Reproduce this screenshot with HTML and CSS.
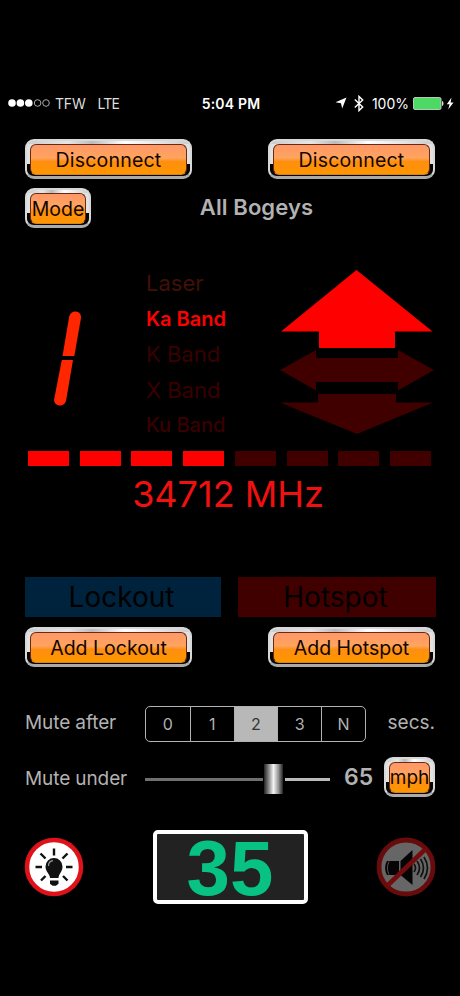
FILE: index.html
```html
<!DOCTYPE html>
<html lang="en">
<head>
  <meta charset="UTF-8" />
  <title>Radar Display</title>
  <link rel="stylesheet" href="styles.css">
</head>
<body>
  <div class="status">
    <div class="carrier">
      <svg width="42" height="10" viewBox="0 0 42 10">
        <g fill="#fff"><circle cx="4" cy="5" r="3.8"/><circle cx="12.4" cy="5" r="3.8"/><circle cx="20.8" cy="5" r="3.8"/></g>
        <g fill="none" stroke="#aaa"><circle cx="29.6" cy="5" r="3.3"/><circle cx="38" cy="5" r="3.3"/></g>
      </svg>
      <span class="tfw">TFW</span>
      <span class="lte">LTE</span>
    </div>
    <div class="clock">5:04 PM</div>
    <div class="system">
      <svg class="location" width="12" height="12" viewBox="0 0 12 12"><path d="M11.5.5 7.2 11.5 6 6.2.5 5.2z" fill="#fff"/></svg>
      <svg class="bluetooth" width="10" height="17" viewBox="0 0 10 17"><path d="M.8 4.6 8.7 12 5 15.6V1.4L8.7 5 .8 12.4" fill="none" stroke="#fff" stroke-width="1.4"/></svg>
      <span class="percent">100%</span>
      <svg class="battery" width="31" height="13" viewBox="0 0 31 13"><rect x=".5" y=".5" width="27.5" height="12" rx="1.5" fill="#4cd964" stroke="#b9c7bb"/><path d="M29 4c2 .5 2 4.5 0 5z" fill="#ddd"/></svg>
      <svg class="bolt" width="8" height="13" viewBox="0 0 8 13"><path d="M5.5.5.8 7.2h2.8L2.2 12.5 7.5 5.5H4.6z" fill="#fff"/></svg>
    </div>
  </div>

  <div class="row connect">
    <button class="btn"><span>Disconnect</span></button>
    <button class="btn"><span>Disconnect</span></button>
  </div>

  <div class="mode">
    <button class="btn btn-mode"><span>Mode</span></button>
    <h1>All Bogeys</h1>
  </div>

  <div class="display">
    <svg class="digit" width="34" height="98" viewBox="0 0 34 98">
      <path d="M11.5 46 18.2 6.500C20-.8 30.500.3 30 8L23.300 46z" fill="#ff2600"/>
      <path d="M10.800 50H22L15.200 90C13.500 98.500 2 96.500 3.200 89z" fill="#ff2600"/>
    </svg>
    <ul class="bands">
      <li class="laser"><span>Laser</span></li>
      <li class="on"><span>Ka Band</span></li>
      <li class="wide"><span>K Band</span></li>
      <li class="wide"><span>X Band</span></li>
      <li><span>Ku Band</span></li>
    </ul>
    <svg class="arrows" width="156" height="166" viewBox="0 0 156 166">
      <path d="M77.5 1 153.5 62.500H116V79H40V62.500H2z" fill="#f00"/>
      <path d="M1 101 37 81V89H119V81L155 101 119 121.500V113H37V121.500z" fill="#400000"/>
      <path d="M39 125H117V133.500H154L78 165 1 133.500H39z" fill="#400000"/>
    </svg>
  </div>

  <div class="signal">
    <i class="on"></i><i class="on"></i><i class="on"></i><i class="on"></i>
    <i></i><i></i><i></i><i></i>
  </div>
  <div class="frequency"><span>34712 MHz</span></div>

  <div class="zones">
    <div class="zone lockout"><span>Lockout</span></div>
    <div class="zone hotspot"><span>Hotspot</span></div>
  </div>
  <div class="row add">
    <button class="btn"><span>Add Lockout</span></button>
    <button class="btn"><span>Add Hotspot</span></button>
  </div>

  <div class="setting after">
    <label>Mute after</label>
    <div class="segments">
      <div>0</div><div>1</div><div class="selected">2</div><div>3</div><div>N</div>
    </div>
    <span class="secs">secs.</span>
  </div>

  <div class="setting under">
    <label>Mute under</label>
    <div class="slider">
      <div class="track low"></div>
      <div class="thumb"></div>
      <div class="track high"></div>
    </div>
    <span class="limit">65</span>
    <button class="btn btn-unit"><span>mph</span></button>
  </div>

  <div class="footer">
    <svg width="60" height="60" viewBox="0 0 60 60">
      <circle cx="30" cy="30" r="27" fill="#fff" stroke="#df1119" stroke-width="4.5"/>
      <g stroke="#111" stroke-width="2.4">
        <path d="M30 11.500v7M16.500 16.500l5 5M43.500 16.500l-5 5M11.500 30h6.500M48.500 30H42M17 43.500l4.500-4.500M43.500 43.500 39 39"/>
      </g>
      <path d="M26 41c0-4-4.500-6-4.500-11.500a8.500 8.500 0 0 1 17 0C38.500 35 34.500 37 34.500 41z" fill="#111"/>
      <path d="M26 43.500h8.500v3.200l-2.600 2h-3.300l-2.600-2z" fill="#111"/>
      <path d="M24.500 29c0-3 2-5 4.500-5.300" fill="none" stroke="#999" stroke-width="1.2"/>
    </svg>
    <div class="speed"><span>35</span></div>
    <svg width="60" height="60" viewBox="0 0 60 60">
      <circle cx="30" cy="30" r="27" fill="#666" stroke="#670b0d" stroke-width="4.8"/>
      <path d="M11 24h12v14H11c-2.500-4-2.500-10 0-14z" fill="#050505"/>
      <path d="M13 24.500c-2 4-2 9 0 13" fill="none" stroke="#555"/>
      <path d="M24.500 24 36.500 13v35L24.500 38z" fill="#050505"/>
      <path d="M38 27q3 4 0 8M41 24q5 7 0 14M44.500 22q6 9 0 18M48 20q7 11 0 22" fill="none" stroke="#111" stroke-width="1.7"/>
      <path d="M11.500 48.500 49.500 12" stroke="#740c0f" stroke-width="4.6"/>
    </svg>
  </div>
</body>
</html>
```

FILE: styles.css
```css
* {
  box-sizing: border-box;
}

body {
  margin: 0;
  padding: 92px 25px 0;
  height: 996px;
  overflow: hidden;
  background: #000;
  color: #b2b2b2;
  font-family: Inter, "Liberation Sans", sans-serif;
}

span {
  white-space: nowrap;
}

.row {
  display: flex;
  justify-content: space-between;
}

/* status bar */
.status {
  display: grid;
  grid-template-columns: 1fr auto 1fr;
  align-items: center;
  height: 22px;
  margin: 0 -19px 0 -17px;
  color: #fff;
  font-size: 14px;
}

.carrier, .system {
  display: flex;
  align-items: center;
}

.carrier {
  color: #ddd;
}

.tfw {
  margin-left: 5px;
  letter-spacing: -0.2px;
}

.lte {
  margin-left: 12px;
  letter-spacing: -0.8px;
}

.clock {
  font-weight: 600;
  letter-spacing: 0.2px;
}

.system {
  justify-content: flex-end;
}

.bluetooth {
  margin: 0 8px 0 7px;
}

.percent {
  margin-right: 4px;
}

.bolt {
  margin-left: 2px;
}

/* glossy orange buttons in a chrome frame */
.btn {
  width: 167px;
  height: 40px;
  padding: 3px 3px 1px;
  border: 2px solid #d8d8d8;
  border-bottom: 3px solid #aaa;
  border-radius: 9px;
  background: linear-gradient(90deg, #ccc, #e6e6e6 25%, #bbb 40%, #fff 60%, #ccc) 0 0 / 100% 3px no-repeat,
    linear-gradient(#e2e2e2 65%, #050505 65%);
  font-family: inherit;
  font-size: 19.5px;
  color: #120600;
}

.btn span {
  display: flex;
  align-items: center;
  justify-content: center;
  height: 100%;
  border: 1px solid #6b2a10;
  border-bottom-color: #d88218;
  border-radius: 6px;
  background: linear-gradient(#ff9868, #ffa45e 45%, #ff8f10 57%, #ff9500);
}

.connect {
  margin-top: 25px;
}

.connect .btn {
  letter-spacing: 0.2px;
}

.mode {
  display: grid;
  grid-template-columns: 66px 1fr;
  margin-top: 9px;
}

.btn-mode {
  width: 66px;
}

h1 {
  margin: 0;
  padding-right: 13px;
  line-height: 39px;
  text-align: center;
  font-size: 22px;
  font-weight: 600;
  letter-spacing: 0.1px;
}

/* detector */
.display {
  display: grid;
  grid-template-columns: 121px 133px 156px;
  height: 181px;
  margin-top: 36px;
}

.digit {
  margin: 46px 0 0 26px;
}

.bands {
  margin: 2px 0 0;
  padding: 0;
  list-style: none;
  font-size: 20px;
  color: #3a0000;
}

.bands li {
  height: 35.5px;
  line-height: 35.5px;
  font-weight: 500;
}

.bands .laser, .bands .wide {
  font-size: 22px;
  font-weight: 400;
}

.bands .laser {
  color: #401008;
}

.bands .on {
  color: #f00;
  font-weight: 600;
}

.arrows {
  margin: 5px 0 0;
}

.signal {
  display: flex;
  justify-content: space-between;
  margin: 6px 4px 0 3px;
}

.signal i {
  width: 41px;
  height: 15px;
  background: #400000;
}

.signal .on {
  background: #f00;
}

.frequency {
  margin-top: 5px;
  padding-right: 4px;
  line-height: 46px;
  text-align: center;
  font-size: 36px;
  color: #f01010;
}

.zones {
  display: grid;
  grid-template-columns: 196px 198px;
  gap: 17px;
  margin-top: 60px;
}

.zone {
  height: 40px;
  line-height: 41px;
  text-align: center;
  font-size: 28px;
  color: #000;
}

.lockout {
  background: #00233d;
}

.hotspot {
  background: #400000;
}

.zone span {
  margin-right: 3px;
}

.add {
  margin-top: 10px;
}

/* settings */
.setting {
  display: flex;
  align-items: center;
  font-size: 19px;
}

.setting label {
  width: 120px;
  letter-spacing: -0.1px;
}

.after {
  height: 36px;
  margin-top: 39px;
}

.after label, .secs {
  margin-top: -3px;
}

.segments {
  display: grid;
  grid-template-columns: repeat(5, 1fr);
  width: 221px;
  height: 36px;
  border: 1px solid #b2b2b2;
  border-radius: 5px;
  line-height: 34px;
  text-align: center;
  font-size: 16px;
  overflow: hidden;
}

.segments div + div {
  border-left: 1px solid #b2b2b2;
}

.segments .selected {
  background: #b8b8b8;
  color: #333;
}

.secs {
  margin-left: auto;
}

.under {
  height: 40px;
  margin-top: 15px;
}

.under label {
  padding-top: 2px;
}

.slider {
  display: flex;
  align-items: center;
  width: 185px;
  height: 40px;
  padding-top: 4px;
}

.track {
  height: 3px;
  background: #707070;
}

.low {
  width: 118px;
}

.high {
  flex: 1;
  margin-left: 2px;
  background: #bbb;
}

.thumb {
  width: 19px;
  height: 30px;
  margin-left: 1px;
  background: linear-gradient(90deg, #222, #888 25%, #f4f4f4 50%, #999 75%, #222);
}

.limit {
  margin-left: 14px;
  font-size: 23px;
  font-weight: 600;
}

.btn-unit {
  width: 51px;
  margin-left: auto;
  font-size: 19px;
}

.footer {
  display: flex;
  justify-content: space-between;
  align-items: center;
  height: 74px;
  margin: 33px -1px 0;
}

.speed {
  width: 155px;
  height: 74px;
  border: 4px solid #fff;
  border-radius: 5px;
  background: #222;
  color: #08c284;
  font: bold 78px/68px "Liberation Sans", sans-serif;
  text-align: center;
}
```
